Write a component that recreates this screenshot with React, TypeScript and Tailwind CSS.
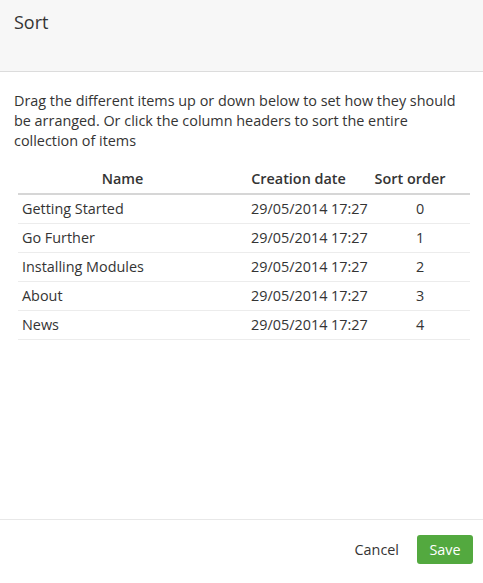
import React from "react";

const rows = [
  { name: "Getting Started", date: "29/05/2014 17:27", order: 0 },
  { name: "Go Further", date: "29/05/2014 17:27", order: 1 },
  { name: "Installing Modules", date: "29/05/2014 17:27", order: 2 },
  { name: "About", date: "29/05/2014 17:27", order: 3 },
  { name: "News", date: "29/05/2014 17:27", order: 4 },
];

export default function App() {
  return (
    <div
      className="flex h-[583px] w-[483px] flex-col bg-white text-[#343434]"
      style={{ fontFamily: '"Open Sans", sans-serif' }}
    >
      <div className="h-[72px] border-b border-[#dcdcdc] bg-[#f7f7f7] px-[14px] pt-[9px]">
        <h1 className="text-[18px] leading-[26px] font-normal">Sort</h1>
      </div>
      <div className="flex-1 px-[14px] pt-[19px]">
        <p className="w-[450px] text-[14.4px] leading-[20px]">
          Drag the different items up or down below to set how they should be arranged. Or click the column headers to sort the entire collection of items
        </p>
        <table className="mt-[13px] ml-1 w-[452px] table-fixed border-collapse text-[14.4px] leading-[20px]">
          <colgroup>
            <col className="w-[229px]" />
            <col className="w-[123px]" />
            <col className="w-[100px]" />
          </colgroup>
          <thead>
            <tr className="border-b-2 border-[#d6d6d6]">
              <th className="pt-[5px] pb-1 pl-1 pr-6 text-center font-semibold">Name</th>
              <th className="pt-[5px] pb-1 pl-1 pr-6 text-center font-semibold">Creation date</th>
              <th className="pt-[5px] pb-1 pl-1 pr-6 text-center font-semibold whitespace-nowrap">Sort order</th>
            </tr>
          </thead>
          <tbody>
            {rows.map((r) => (
              <tr key={r.order} className="border-b border-[#ececec]">
                <td className="px-1 py-1">{r.name}</td>
                <td className="px-1 py-1 whitespace-nowrap">{r.date}</td>
                <td className="px-1 py-1 text-center">{r.order}</td>
              </tr>
            ))}
          </tbody>
        </table>
      </div>
      <div className="flex h-[64px] items-start justify-end gap-[8px] border-t border-[#e8e8e8] pr-[10px] pt-[15px]">
        <button className="h-[29px] px-[10px] text-[14.4px] text-[#343434]">Cancel</button>
        <button className="h-[29px] w-[56px] rounded-[3px] bg-[#53a93f] text-[14.4px] text-white">Save</button>
      </div>
    </div>
  );
}
